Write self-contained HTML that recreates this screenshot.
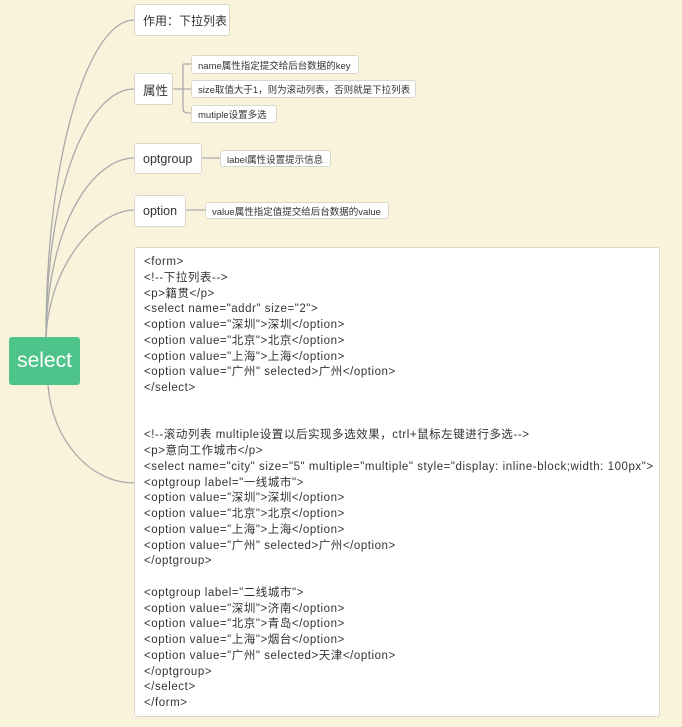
<!DOCTYPE html>
<html><head><meta charset="utf-8">
<style>
html,body{margin:0;padding:0;}
body{width:682px;height:727px;background:#faf3dc;position:relative;overflow:hidden;font-family:"Liberation Sans","Noto Sans CJK SC",sans-serif;color:#333;}
.b{position:absolute;background:#fff;border:1px solid #d9d6cc;border-radius:3px;box-sizing:border-box;display:flex;align-items:center;white-space:nowrap;}
.n{font-size:12.5px;padding-left:8px;}
.s{font-size:9.5px;padding-left:6px;}
#root{position:absolute;left:9px;top:337px;width:71px;height:48px;background:#4fc48a;border-radius:3px;color:#fff;font-size:21px;display:flex;align-items:center;justify-content:center;}
#code{position:absolute;left:134px;top:247px;width:526px;height:470px;background:#fff;border:1px solid #d9d6cc;border-radius:3px;box-sizing:border-box;padding:7px 0 0 9px;font-size:11.5px;letter-spacing:0.55px;line-height:15.75px;white-space:pre;color:#333;overflow:hidden;}
svg{position:absolute;left:0;top:0;}
</style></head><body>
<svg width="682" height="727" fill="none" stroke="#aaa" stroke-width="1.3">
<path d="M46,337 C46,150 90,20 134,20"/>
<path d="M46,337 C47,180 90,89 134,89"/>
<path d="M46,337 C48,220 95,158 134,158"/>
<path d="M46,337 C50,260 100,210 134,210"/>
<path d="M48,385 C52,440 90,483 134,483"/>
<path d="M172,89 H183"/>
<path d="M183,64 V108 Q183,113 188,113 H191 M183,64 Q183,64 188,64 H191 M183,89 H191"/>
<path d="M201,158 H220"/>
<path d="M185,210 H205"/>
</svg>
<div id="root">select</div>
<div class="b n" style="left:134px;top:4px;width:96px;height:32px;font-size:12px;">作用：下拉列表</div>
<div class="b n" style="left:134px;top:73px;width:39px;height:32px;">属性</div>
<div class="b s" style="left:191px;top:55px;width:168px;height:19px;">name属性指定提交给后台数据的key</div>
<div class="b s" style="left:191px;top:80px;width:225px;height:18px;">size取值大于1，则为滚动列表，否则就是下拉列表</div>
<div class="b s" style="left:191px;top:105px;width:86px;height:18px;">mutiple设置多选</div>
<div class="b n" style="left:134px;top:143px;width:68px;height:31px;">optgroup</div>
<div class="b s" style="left:220px;top:150px;width:111px;height:17px;">label属性设置提示信息</div>
<div class="b n" style="left:134px;top:195px;width:52px;height:32px;">option</div>
<div class="b s" style="left:205px;top:202px;width:184px;height:17px;">value属性指定值提交给后台数据的value</div>
<div id="code">&lt;form&gt;
&lt;!--下拉列表--&gt;
&lt;p&gt;籍贯&lt;/p&gt;
&lt;select name="addr" size="2"&gt;
&lt;option value="深圳"&gt;深圳&lt;/option&gt;
&lt;option value="北京"&gt;北京&lt;/option&gt;
&lt;option value="上海"&gt;上海&lt;/option&gt;
&lt;option value="广州" selected&gt;广州&lt;/option&gt;
&lt;/select&gt;


&lt;!--滚动列表 multiple设置以后实现多选效果，ctrl+鼠标左键进行多选--&gt;
&lt;p&gt;意向工作城市&lt;/p&gt;
&lt;select name="city" size="5" multiple="multiple" style="display: inline-block;width: 100px"&gt;
&lt;optgroup label="一线城市"&gt;
&lt;option value="深圳"&gt;深圳&lt;/option&gt;
&lt;option value="北京"&gt;北京&lt;/option&gt;
&lt;option value="上海"&gt;上海&lt;/option&gt;
&lt;option value="广州" selected&gt;广州&lt;/option&gt;
&lt;/optgroup&gt;

&lt;optgroup label="二线城市"&gt;
&lt;option value="深圳"&gt;济南&lt;/option&gt;
&lt;option value="北京"&gt;青岛&lt;/option&gt;
&lt;option value="上海"&gt;烟台&lt;/option&gt;
&lt;option value="广州" selected&gt;天津&lt;/option&gt;
&lt;/optgroup&gt;
&lt;/select&gt;
&lt;/form&gt;</div>
</body></html>
